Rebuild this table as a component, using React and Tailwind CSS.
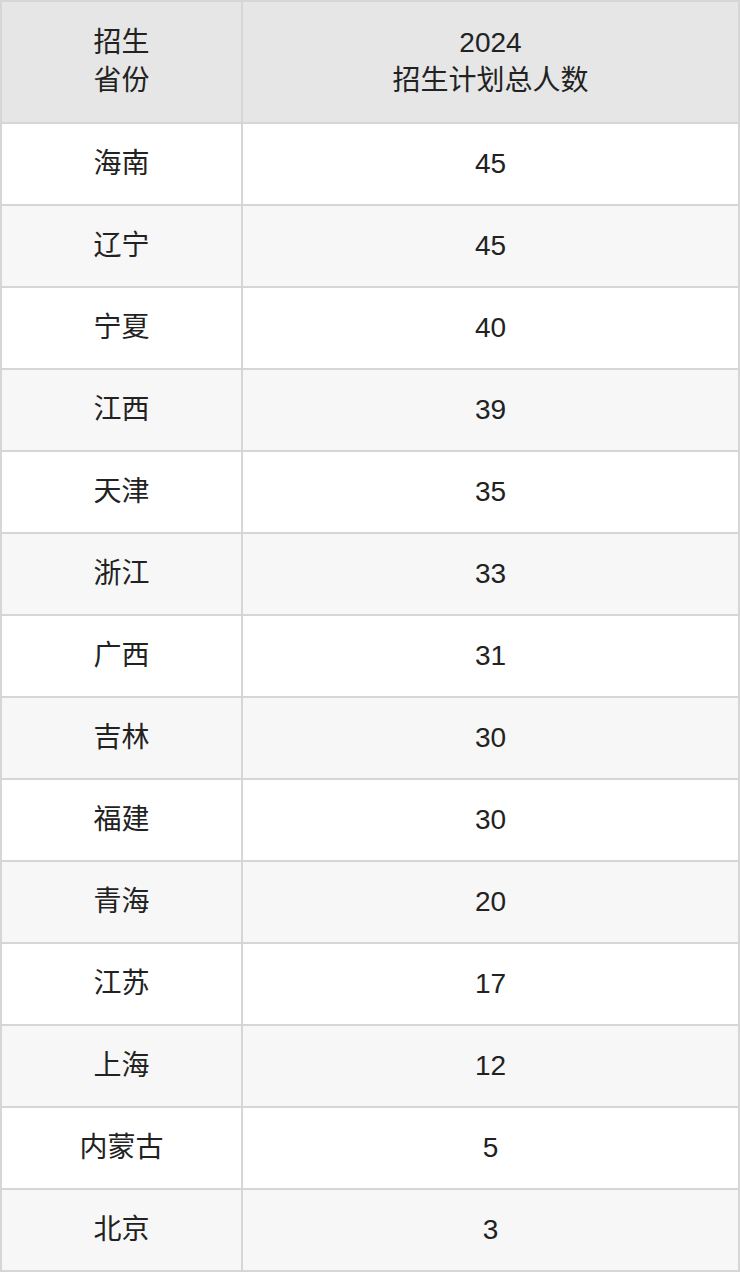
import React from 'react'

const rows = [
  ['海南', '45'],
  ['辽宁', '45'],
  ['宁夏', '40'],
  ['江西', '39'],
  ['天津', '35'],
  ['浙江', '33'],
  ['广西', '31'],
  ['吉林', '30'],
  ['福建', '30'],
  ['青海', '20'],
  ['江苏', '17'],
  ['上海', '12'],
  ['内蒙古', '5'],
  ['北京', '3'],
]

const App = () => {
  return (
    <div
      className="w-[740px] bg-white text-[#222222]"
      style={{ fontFamily: '"Liberation Sans", "Noto Sans CJK SC", sans-serif' }}
    >
      <table className="w-full border-collapse text-[28px] leading-[38px]">
        <thead>
          <tr className="bg-[#e6e6e6]">
            <th className="w-[241px] h-[122px] border-2 border-[#d6d6d6] font-normal text-center">
              招生
              <br />
              省份
            </th>
            <th className="h-[122px] border-2 border-[#d6d6d6] font-normal text-center">
              2024
              <br />
              招生计划总人数
            </th>
          </tr>
        </thead>
        <tbody>
          {rows.map((r, i) => (
            <tr key={i} className={i % 2 === 0 ? 'bg-white' : 'bg-[#f7f7f7]'}>
              <td className="h-[82px] border-2 border-[#d6d6d6] text-center">{r[0]}</td>
              <td className="h-[82px] border-2 border-[#d6d6d6] text-center">{r[1]}</td>
            </tr>
          ))}
        </tbody>
      </table>
    </div>
  )
}

export default App
